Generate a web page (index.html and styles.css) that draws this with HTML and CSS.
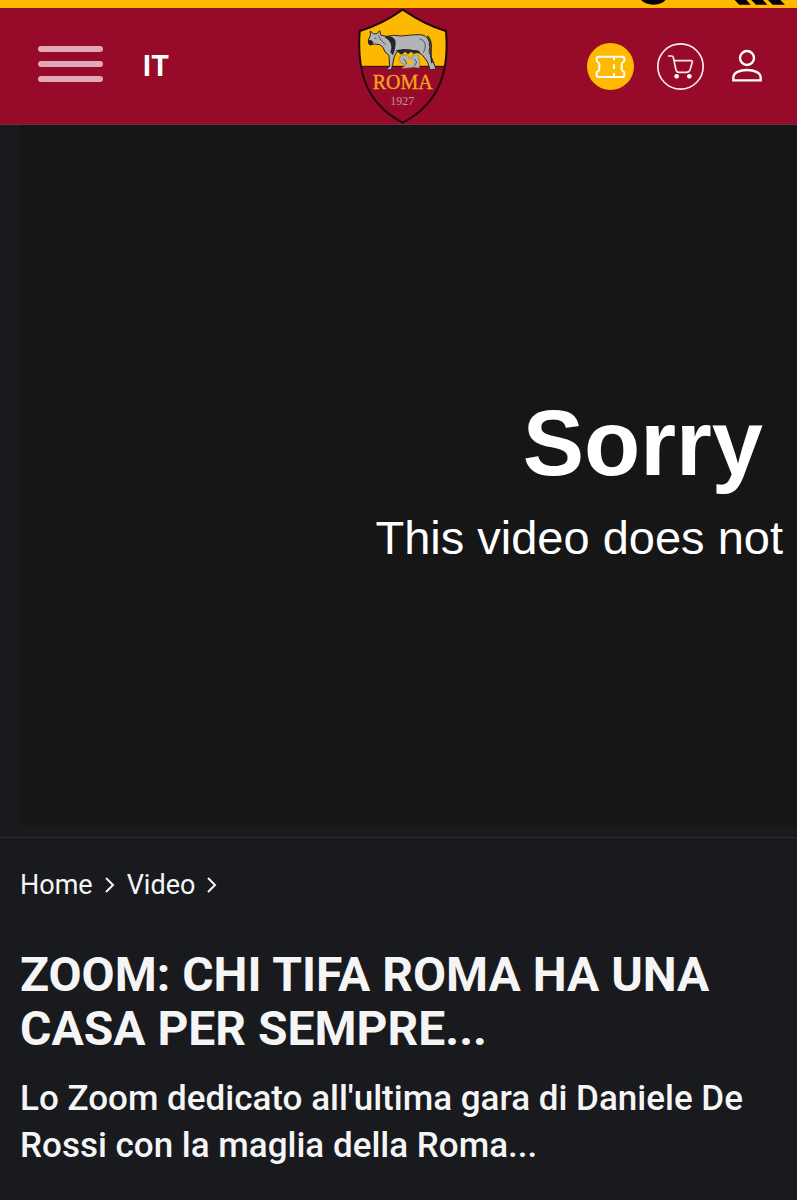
FILE: index.html
```html
<!DOCTYPE html>
<html lang="it">
<head>
<meta charset="utf-8">
<meta name="viewport" content="width=device-width, initial-scale=1">
<title>Zoom: chi tifa Roma ha una casa per sempre</title>
<link rel="stylesheet" href="styles.css">
</head>
<body>
<div class="sponsor-bar">
  <svg class="sponsor-marks" viewBox="0 0 474 24" aria-hidden="true">
    <path d="M6 0Q20 14 44 14Q67 14 80 0Z"/>
    <path d="M287 0H322L335 14H301ZM337 0H372L385 14H351ZM387 0H424L438 14H401Z"/>
  </svg>
</div>
<header class="header">
  <div class="header-left">
    <button class="menu" type="button" aria-label="Menu"><span class="menu-line"></span><span class="menu-line"></span><span class="menu-line"></span></button>
    <button class="language" type="button">IT</button>
  </div>
  <a class="crest" href="#" aria-label="AS Roma">
    <svg viewBox="50 26 276 348" aria-hidden="true">
      <path class="crest-red" d="M187 31C150 57 103 82 58 95C51 195 64 306 187 370C310 306 326 195 317 95C272 82 225 57 187 31Z"/>
      <path class="crest-gold" d="M187 33C150 58 103 83 60 97C57 133 57 168 63 201H312C318 168 318 133 315 97C272 83 225 58 187 33Z"/>
      <path class="crest-rule" d="M64 201H311"/>
      <g class="wolf">
        <path d="M84 122L90 109L90 95L100 104L110 103L118 94L122 108L139 111L160 108L184 110L211 107L238 106Q260 106 267 128Q270 146 266 158L278 185L287 209L269 212L262 188L247 168L232 156L209 152L188 152L169 158L161 174L157 195L153 211L137 212L148 201L146 168L134 158L128 144L118 136L102 134L89 137L85 131Z"/>
        <path class="wolf-tail" d="M261 110Q275 124 272 149Q270 169 275 191"/>
        <path class="wolf-dark" d="M137 110Q164 108 166 130Q166 150 158 168L150 159Q158 139 145 123L133 114ZM83 122L94 123L100 131L90 138L84 133ZM166 153L190 149L211 151L236 154L240 163L228 160L222 165L212 157L203 165L195 157L183 166Z"/>
        <path class="wolf-line" d="M238 119Q254 123 255 137Q256 149 249 160M114 109L122 122L136 136M102 116L108 118"/>
        <path class="cub" d="M177 178Q177 168 188 168L200 166L207 176L215 177L217 166Q229 158 235 172L239 192L236 206L219 203L211 205L185 207L196 197L180 189Z"/>
        <path class="wolf-gold" d="M204 181L213 183L216 194L207 196L198 189Z"/>
        <path class="wolf-line" d="M188 178Q196 180 199 194M222 179L229 188L223 199"/>
      </g>
      <text class="crest-name" x="187" y="270">ROMA</text>
      <text class="crest-year" x="186" y="316">1927</text>
      <path class="crest-edge" d="M187 31C150 57 103 82 58 95C51 195 64 306 187 370C310 306 326 195 317 95C272 82 225 57 187 31Z"/>
    </svg>
  </a>
  <nav class="actions" aria-label="Servizi">
    <a class="action ticket" href="#" aria-label="Biglietti">
      <svg viewBox="48 129 141 141" aria-hidden="true"><path d="M83 170H154Q160 170 160 176V183Q152 188 152 193V207Q152 212 160 217V225Q160 231 154 231H83Q77 231 77 225V217Q85 212 85 207V193Q85 188 77 183V176Q77 170 83 170Z"/><path d="M129 173V181M129 193V207M129 219V229"/></svg>
    </a>
    <a class="action cart" href="#" aria-label="Store">
      <svg viewBox="258 129 141 141" aria-hidden="true"><circle cx="328.500" cy="199.500" r="68"/><path d="M291 168H302Q306 168 307 172L315 210Q317 217 324 217H346Q354 217 357 210L364 186Q365 182 360 182H310"/><circle class="wheel" cx="317" cy="229" r="7"/><circle class="wheel" cx="355" cy="229" r="7"/></svg>
    </a>
    <a class="action user" href="#" aria-label="Profilo">
      <svg viewBox="470 140 120 120" aria-hidden="true"><circle cx="530" cy="176" r="21"/><path d="M489 243V235C489 219 509 212 530 212C551 212 571 219 571 235V243Z"/></svg>
    </a>
  </nav>
</header>
<main>
  <section class="player" aria-label="Video">
    <div class="video">
      <p class="video-title">Sorry</p>
      <p class="video-message">This video does not</p>
    </div>
  </section>
  <article class="info">
    <nav class="breadcrumb" aria-label="Percorso">
      <a href="#">Home</a>
      <svg class="chevron" viewBox="0 0 10 18" aria-hidden="true"><path d="M1 2L8 9L1 16"/></svg>
      <a href="#">Video</a>
      <svg class="chevron" viewBox="0 0 10 18" aria-hidden="true"><path d="M1 2L8 9L1 16"/></svg>
    </nav>
    <h1 class="title">ZOOM: CHI TIFA ROMA HA UNA CASA PER SEMPRE...</h1>
    <p class="summary">Lo Zoom dedicato all'ultima gara di Daniele De Rossi con la maglia della Roma...</p>
  </article>
</main>
</body>
</html>
```
FILE: styles.css
```css
* { box-sizing: border-box; }
body {
  margin: 0;
  background: #191a1e;
  color: #f5f5f6;
  font-family: Roboto, "Liberation Sans", sans-serif;
}
a { color: inherit; text-decoration: none; }
button { padding: 0; border: 0; background: none; color: inherit; font: inherit; cursor: pointer; }
svg { display: block; }
p, h1 { margin: 0; }

.sponsor-bar { display: flex; justify-content: flex-end; height: 8px; background: #ffb900; }
.sponsor-marks { width: 158px; height: 8px; }

.header {
  display: grid;
  grid-template-columns: 1fr auto 1fr;
  align-items: center;
  padding: 0 30px 0 38px;
  background: #980a2a;
  border-bottom: 1px solid #69313f;
}
.header-left { display: flex; align-items: center; gap: 40px; }
.menu { display: flex; flex-direction: column; gap: 9px; width: 65px; padding-bottom: 5px; }
.menu-line { height: 6px; border-radius: 3px; background: #e1a9b7; }
.language { color: #fff; font: 700 28px/32px Inter, sans-serif; }

.crest svg { width: 92px; height: 116px; }
.crest-red { fill: #980a2a; }
.crest-gold { fill: #fdb900; }
.crest-rule { fill: none; stroke: #28070e; stroke-width: 3; }
.crest-edge { fill: none; stroke: #24080d; stroke-width: 6; stroke-linejoin: round; }
.wolf { fill: #b3b4b7; stroke: #252427; stroke-width: 3; stroke-linejoin: round; }
.wolf .wolf-tail { fill: none; stroke-width: 5; }
.wolf .wolf-dark { fill: #252427; stroke: none; }
.wolf .wolf-gold { fill: #fdb900; stroke: none; }
.wolf .wolf-line { fill: none; stroke-width: 2; }
.wolf .cub { stroke: #a67b1c; stroke-width: 2; }
.crest-name { fill: #f5a51b; stroke: #f5a51b; stroke-width: 1; font: 60px "Liberation Serif", serif; text-anchor: middle; }
.crest-year { fill: #c1909d; font: 36px "Liberation Serif", serif; text-anchor: middle; }

.actions { display: flex; align-items: center; justify-content: flex-end; gap: 23px; }
.action svg { width: 47px; height: 47px; fill: none; stroke: #fff; stroke-width: 5; stroke-linejoin: round; }
.ticket { border-radius: 50%; background: #ffb900; }
.ticket svg { stroke-width: 6; }
.cart svg { stroke: #fbe9ef; stroke-width: 5; }
.cart .wheel { fill: #fff; stroke: none; }
.user svg { width: 40px; height: 40px; stroke-width: 7; stroke-linejoin: miter; }

.player { padding: 0 0 11px 20px; border-bottom: 1px solid #2a2b2f; }
.video {
  display: flex;
  flex-direction: column;
  align-items: flex-end;
  justify-content: center;
  gap: 15px;
  aspect-ratio: 777 / 701;
  padding: 14px 14px 0 0;
  background: #161616;
  color: #fff;
  font-family: "Liberation Sans", Arial, sans-serif;
}
.video-title { padding-right: 20px; font-size: 92px; font-weight: 700; line-height: 96px; }
.video-message { font-size: 47px; line-height: 64px; }

.info { padding: 30px 20px 32px; }
.breadcrumb { display: flex; align-items: center; gap: 12px; font-size: 27px; line-height: 34px; }
.chevron { width: 10px; height: 18px; fill: none; stroke: #f5f5f6; stroke-width: 2; }
.title { margin-top: 46px; font-size: 48px; font-weight: 700; line-height: 54px; }
.summary { margin-top: 19px; font-size: 35px; font-weight: 500; line-height: 47px; }
```
